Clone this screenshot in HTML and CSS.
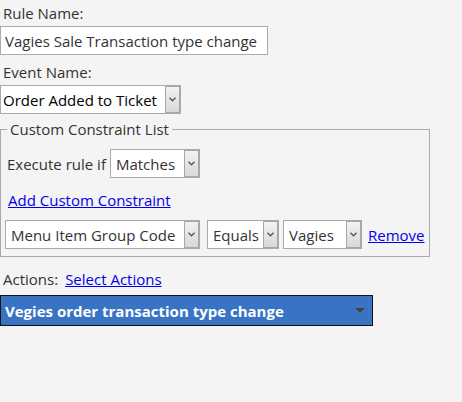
FILE: index.html
```html
<!DOCTYPE html>
<html lang="en">
<head>
    <meta charset="UTF-8">
    <meta name="viewport" content="width=device-width, initial-scale=1.0">
    <title>Rule Editor</title>
    <link rel="stylesheet" href="styles.css">
</head>
<body>
    <div class="rule-form">
        <div class="field">
            <label class="field-label" for="ruleName">Rule Name:</label>
            <input type="text" id="ruleName" class="text-input" value="Vagies Sale Transaction type change">
        </div>

        <div class="field">
            <label class="field-label" for="eventName">Event Name:</label>
            <div class="select-wrap event-select">
                <select id="eventName">
                    <option>Order Added to Ticket</option>
                </select>
                <span class="select-arrow"><svg width="7" height="5" viewBox="0 0 7 5"><path d="M0.5 0.8 L3.5 3.8 L6.5 0.8" fill="none" stroke="#555" stroke-width="1.3"/></svg></span>
            </div>
        </div>

        <fieldset class="constraints">
            <legend>Custom Constraint List</legend>
            <div class="execute-row">
                <span>Execute rule if</span>
                <div class="select-wrap match-select">
                    <select>
                        <option>Matches</option>
                    </select>
                    <span class="select-arrow"><svg width="7" height="5" viewBox="0 0 7 5"><path d="M0.5 0.8 L3.5 3.8 L6.5 0.8" fill="none" stroke="#555" stroke-width="1.3"/></svg></span>
                </div>
            </div>
            <div class="add-row">
                <a href="#" class="link">Add Custom Constraint</a>
            </div>
            <div class="constraint-row">
                <div class="select-wrap name-select">
                    <select>
                        <option>Menu Item Group Code</option>
                    </select>
                    <span class="select-arrow"><svg width="7" height="5" viewBox="0 0 7 5"><path d="M0.5 0.8 L3.5 3.8 L6.5 0.8" fill="none" stroke="#555" stroke-width="1.3"/></svg></span>
                </div>
                <div class="select-wrap op-select">
                    <select>
                        <option>Equals</option>
                    </select>
                    <span class="select-arrow"><svg width="7" height="5" viewBox="0 0 7 5"><path d="M0.5 0.8 L3.5 3.8 L6.5 0.8" fill="none" stroke="#555" stroke-width="1.3"/></svg></span>
                </div>
                <div class="select-wrap value-select">
                    <select>
                        <option>Vagies</option>
                    </select>
                    <span class="select-arrow"><svg width="7" height="5" viewBox="0 0 7 5"><path d="M0.5 0.8 L3.5 3.8 L6.5 0.8" fill="none" stroke="#555" stroke-width="1.3"/></svg></span>
                </div>
                <a href="#" class="link">Remove</a>
            </div>
        </fieldset>

        <div class="actions-row">
            <span>Actions:</span>
            <a href="#" class="link">Select Actions</a>
        </div>

        <div class="action-bar">
            <span>Vegies order transaction type change</span>
            <span class="bar-arrow"></span>
        </div>
    </div>
</body>
</html>
```

FILE: styles.css
```css
body {
    margin: 0;
    background-color: #f4f4f4;
    font-family: "Open Sans", "Noto Sans", sans-serif;
    font-size: 15px;
    color: #333;
}
.rule-form {
    width: 462px;
}
.field + .field {
    margin-top: 4px;
}
.field-label {
    display: block;
    line-height: 20px;
    padding: 3px 0 3px 3px;
}
.text-input {
    display: block;
    box-sizing: border-box;
    width: 268px;
    height: 29px;
    margin: 0;
    padding: 0 4px;
    border: 1px solid #aaa;
    background: #fff;
    font: inherit;
    color: #333;
}
.select-wrap {
    position: relative;
    display: inline-block;
    vertical-align: middle;
}
.select-wrap select {
    display: block;
    box-sizing: border-box;
    width: 100%;
    height: 29px;
    margin: 0;
    padding: 0 18px 0 5px;
    border: 1px solid #aaa;
    border-radius: 0;
    background: #fff;
    font: inherit;
    color: #333;
    appearance: none;
    -webkit-appearance: none;
}
.select-arrow {
    position: absolute;
    top: 1px;
    right: 1px;
    bottom: 1px;
    width: 13px;
    border: 1px solid #a6a6a6;
    background: linear-gradient(#f2f2f2, #d8d8d8);
    display: flex;
    align-items: center;
    justify-content: center;
    pointer-events: none;
}
.event-select {
    display: block;
    width: 181px;
}
.event-select select {
    padding-left: 2px;
    color: #000;
}
.constraints {
    box-sizing: border-box;
    width: 430px;
    margin: 5px 0 0;
    padding: 10px 4px 7px;
    border: 1px solid #aaa;
}
.constraints legend {
    margin-left: 2px;
    padding: 0 3px;
}
.execute-row {
    display: flex;
    align-items: center;
    gap: 4px;
    padding-left: 2px;
}
.match-select {
    width: 90px;
}
.add-row {
    padding: 12px 0 10px 3px;
    line-height: 20px;
}
.link {
    color: #00e;
}
.constraint-row {
    display: flex;
    align-items: center;
}
.name-select {
    width: 195px;
}
.op-select {
    width: 72px;
    margin-left: 7px;
}
.value-select {
    width: 79px;
    margin-left: 4px;
}
.constraint-row .link {
    margin-left: 6px;
}
.actions-row {
    display: flex;
    gap: 7px;
    padding: 12px 0 6px 3px;
    line-height: 20px;
}
.action-bar {
    box-sizing: border-box;
    width: 373px;
    height: 31px;
    display: flex;
    align-items: center;
    justify-content: space-between;
    padding: 0 7px 0 4px;
    background-color: #3873c4;
    border: 1px solid #111;
    color: #fff;
    font-weight: bold;
}
.bar-arrow {
    width: 0;
    height: 0;
    border-left: 5px solid transparent;
    border-right: 5px solid transparent;
    border-top: 5px solid #444;
}
```
